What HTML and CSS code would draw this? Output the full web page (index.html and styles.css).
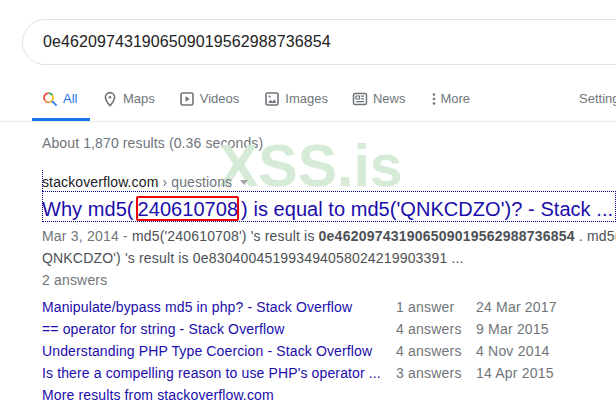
FILE: index.html
```html
<!DOCTYPE html>
<html lang="en">
<head>
<meta charset="utf-8">
<title>Search results</title>
<link rel="stylesheet" href="styles.css">
</head>
<body>
<header class="header">
  <div class="search">0e462097431906509019562988736854</div>
  <nav class="tabs">
    <a class="tab tab-all">
      <svg class="icon" viewBox="0 0 16 16" width="16" height="16" fill="none" stroke-width="1.7">
        <path d="M6.5 2.1a4.7 4.7 0 0 1 4 2.2" stroke="#34a853"/>
        <path d="M6.5 2.1a4.7 4.7 0 0 0-3.600 7.400" stroke="#ea4335"/>
        <path d="M2.900 9.500a4.700 4.700 0 0 0 5.400 1.500" stroke="#f28b3c"/>
        <path d="M10.500 4.300a4.700 4.700 0 0 1-2.200 6.700" stroke="#fbbc05"/>
        <path d="M10 10l4.600 4.600" stroke="#4285f4" stroke-width="2"/>
      </svg>
      <span>All</span>
    </a>
    <a class="tab tab-maps">
      <svg class="icon" viewBox="0 0 16 16" width="16" height="16" fill="none" stroke="#70757a" stroke-width="1.6">
        <path d="M8 1.600a4.600 4.600 0 0 0-4.600 4.600C3.400 9.500 8 14.600 8 14.600s4.600-5.100 4.600-8.400A4.600 4.600 0 0 0 8 1.600z"/>
        <circle cx="8" cy="6.200" r="1.300" fill="#70757a" stroke="none"/>
      </svg>
      <span>Maps</span>
    </a>
    <a class="tab tab-videos">
      <svg class="icon" viewBox="0 0 16 16" width="16" height="16" fill="none" stroke="#70757a" stroke-width="1.6">
        <rect x="2" y="2" width="12" height="12" rx="1.500"/>
        <path d="M6.500 5.200v5.600L10.800 8z" fill="#70757a" stroke="none"/>
      </svg>
      <span>Videos</span>
    </a>
    <a class="tab tab-images">
      <svg class="icon" viewBox="0 0 16 16" width="16" height="16" fill="none" stroke="#70757a" stroke-width="1.600">
        <rect x="2" y="2" width="12" height="12" rx="1.500"/>
        <path d="M4 12l2.600-3.200 1.800 2 2-2.600L12.300 12z" fill="#70757a" stroke="none"/>
        <circle cx="5.600" cy="5.600" r="1" fill="#70757a" stroke="none"/>
      </svg>
      <span>Images</span>
    </a>
    <a class="tab tab-news">
      <svg class="icon" viewBox="0 0 16 16" width="16" height="16" fill="none" stroke="#70757a" stroke-width="1.500">
        <rect x="1.500" y="2.500" width="13" height="11" rx="1.500"/>
        <path d="M4 5h3.500v3H4zM9 5.200h3.200M9 7.800h3.200M4 10.600h8.200" stroke-width="1.200"/>
      </svg>
      <span>News</span>
    </a>
    <a class="tab tab-more">
      <svg class="dots" viewBox="0 0 4 14" width="4" height="14" fill="#70757a">
        <circle cx="2" cy="2.500" r="1.300"/>
        <circle cx="2" cy="7" r="1.300"/>
        <circle cx="2" cy="11.500" r="1.300"/>
      </svg>
      <span>More</span>
    </a>
    <a class="tab tab-settings"><span>Settings</span></a>
  </nav>
</header>
<div class="watermark">XSS.is</div>
<main class="main">
  <p class="stats">About 1,870 results (0.36 seconds)</p>
  <article class="result">
    <div class="cite"><span class="host">stackoverflow.com</span> › questions <span class="caret"></span></div>
    <h3 class="title">Why md5(<span class="mark">240610708</span>) is equal to md5('QNKCDZO')? - Stack ...</h3>
    <p class="snippet"><span class="date">Mar 3, 2014 - </span>md5('240610708') 's result is <b>0e462097431906509019562988736854</b> . md5(<br>QNKCDZO') 's result is 0e830400451993494058024219903391 ...</p>
    <p class="answers">2 answers</p>
    <div class="sitelinks">
      <a class="link">Manipulate/bypass md5 in php? - Stack Overflow</a><span>1 answer</span><span>24 Mar 2017</span>
      <a class="link">== operator for string - Stack Overflow</a><span>4 answers</span><span>9 Mar 2015</span>
      <a class="link">Understanding PHP Type Coercion - Stack Overflow</a><span>4 answers</span><span>4 Nov 2014</span>
      <a class="link">Is there a compelling reason to use PHP's operator ...</a><span>3 answers</span><span>14 Apr 2015</span>
    </div>
    <a class="link more-results">More results from stackoverflow.com</a>
  </article>
</main>
</body>
</html>
```
FILE: styles.css
```css
html, body {
  margin: 0;
  padding: 0;
  height: 406px;
  overflow: hidden;
  background: #fff;
  font-family: "Liberation Sans", Arial, sans-serif;
}
body { position: relative; }
.header {
  height: 102px;
  padding-top: 19px;
  border-bottom: 1px solid #ebebeb;
}
.search {
  box-sizing: border-box;
  width: 660px;
  height: 46px;
  margin-left: 22px;
  padding-left: 20px;
  border: 1px solid #dfe1e5;
  border-radius: 24px;
  font-size: 16px;
  line-height: 44px;
  letter-spacing: 0.09px;
  color: #222;
}
.tabs {
  display: flex;
  height: 56px;
  margin-left: 32px;
  white-space: nowrap;
}
.tab {
  display: flex;
  flex: none;
  align-items: center;
  gap: 5px;
  box-sizing: border-box;
  height: 53px;
  padding-top: 14px;
  font-size: 13px;
  color: #70757a;
}
.icon { flex: none; }
.tab-all {
  width: 58px;
  height: 56px;
  padding: 14px 0 0 10px;
  border-bottom: 3px solid #1a73e8;
  color: #1a73e8;
}
.tab-maps { margin-left: 12px; }
.tab-videos { margin-left: 24px; }
.tab-images { margin-left: 25px; }
.tab-news { margin-left: 24px; }
.tab-more { margin-left: 27px; gap: 4px; }
.tab-settings { margin-left: 109px; }
.main { padding-left: 42px; }
.stats {
  margin: 0;
  padding-top: 13px;
  font-size: 14px;
  line-height: 16px;
  letter-spacing: 0.12px;
  color: #70757a;
}
.result { margin-top: 19px; }
.cite {
  position: relative;
  height: 21px;
  font-size: 14px;
  line-height: 24px;
  letter-spacing: 0.12px;
  color: #70757a;
  white-space: nowrap;
}
.cite::before {
  content: "";
  position: absolute;
  left: 0;
  top: 0;
  height: 21px;
  border-left: 1px dotted #00008b;
}
.host { color: #202124; }
.caret {
  display: inline-block;
  margin-left: 4px;
  vertical-align: 2px;
  border-top: 5px solid #a3a6a9;
  border-left: 4px solid transparent;
  border-right: 4px solid transparent;
}
.title {
  position: relative;
  box-sizing: border-box;
  width: 574px;
  height: 31px;
  margin: 0;
  padding-top: 7px;
  font-size: 20px;
  font-weight: 400;
  line-height: 23px;
  letter-spacing: 0.05px;
  color: #1a0dab;
  white-space: nowrap;
}
.title::before {
  content: "";
  position: absolute;
  inset: 0;
  border: 1px dotted #00008b;
}
.mark {
  position: relative;
  margin: 0 3px 0 4px;
}
.mark::after {
  content: "";
  position: absolute;
  left: -2px;
  right: -1px;
  top: -2px;
  bottom: -1px;
  border: 2px solid #f00000;
  border-radius: 2px;
}
.snippet, .answers {
  margin: 0;
  font-size: 14px;
  line-height: 22px;
  letter-spacing: 0.17px;
  color: #4d5156;
  white-space: nowrap;
}
.snippet { margin-top: 3px; }
.snippet b { letter-spacing: 0.22px; }
.date { letter-spacing: 0.2px; }
.date, .answers { color: #70757a; }
.sitelinks {
  display: grid;
  grid-template-columns: 354px 80px 1fr;
  margin-top: 5px;
  font-size: 14px;
  line-height: 22px;
  letter-spacing: 0.2px;
  color: #70757a;
  white-space: nowrap;
}
.link {
  letter-spacing: 0.13px;
  color: #1a0dab;
}
.more-results {
  display: block;
  font-size: 14px;
  line-height: 22px;
}
.watermark {
  position: absolute;
  left: 219px;
  top: 132px;
  font-size: 59px;
  line-height: 68px;
  font-weight: 700;
  color: #d5ebd7;
  pointer-events: none;
}
```
